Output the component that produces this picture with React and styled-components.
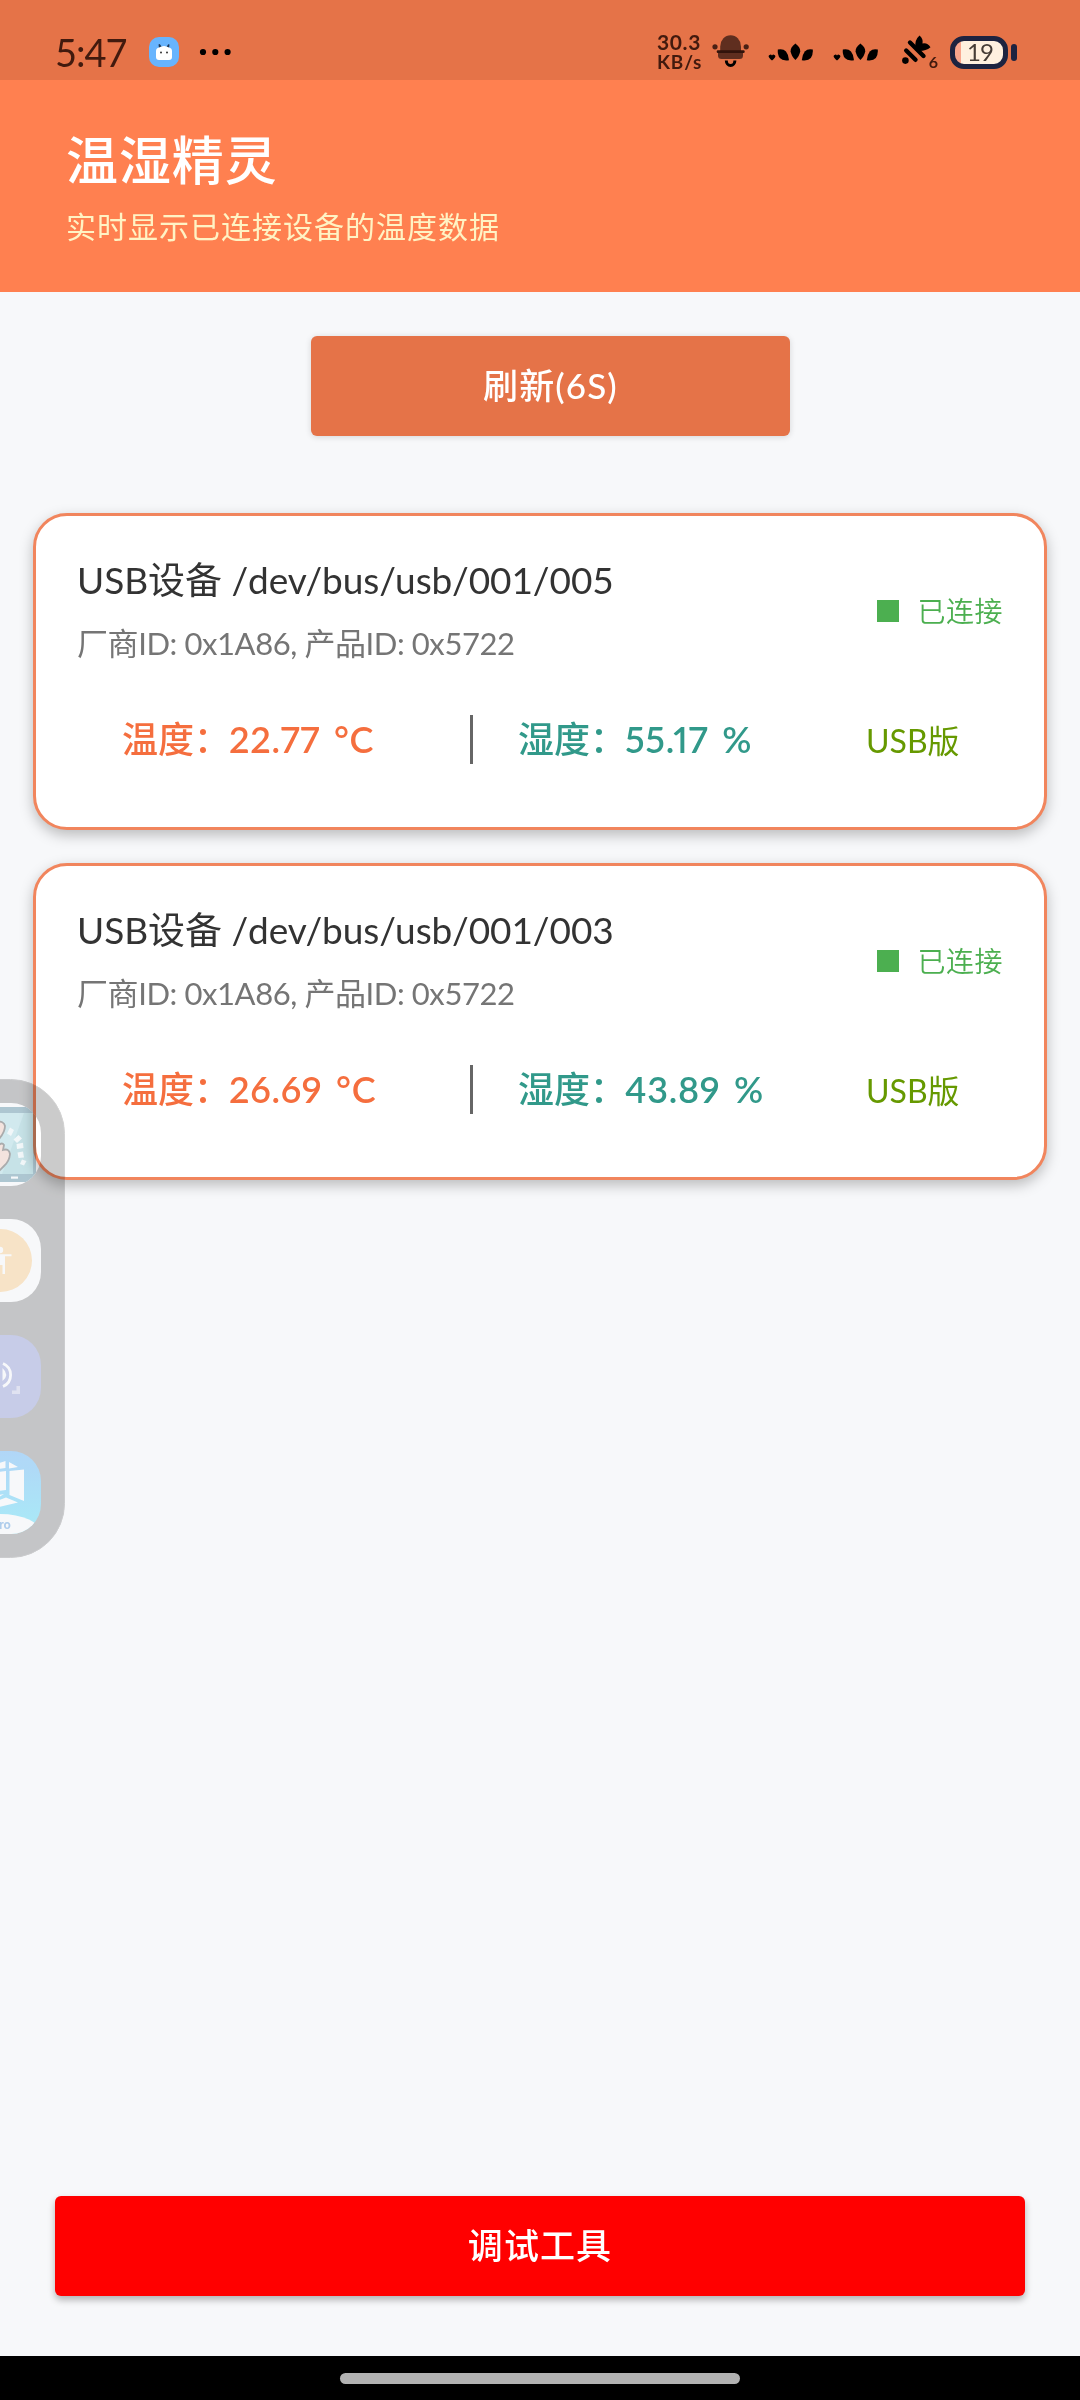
import styled, { createGlobalStyle } from "styled-components";

const GlobalStyle = createGlobalStyle`
    * {
        box-sizing: border-box;
    }
    body {
        margin: 0;
        background: #f7f8fa;
        font-family: Lato, "Noto Sans CJK SC", sans-serif;
    }
`
const Screen = styled.div`
    position: relative;
    display: flex;
    flex-direction: column;
    width: 1080px;
    height: 2400px;
    background: #f7f8fa;
    overflow: hidden;
`
const StatusBar = styled.div`
    display: flex;
    align-items: flex-start;
    justify-content: space-between;
    height: 80px;
    padding: 32px 63px 0 55px;
    background: #e57348;
    color: #421a0e;
`
const StatusGroup = styled.div`
    display: flex;
    align-items: center;
    height: 40px;
`
const Clock = styled.span`
    width: 94px;
    font-size: 38px;
    line-height: 40px;
    letter-spacing: -1px;
`
const NetSpeed = styled.div`
    display: grid;
    width: 55px;
    font-size: 21px;
    font-weight: 700;
    line-height: 20px;
    letter-spacing: 0.6px;
`
const NetUnit = styled.span`
    font-size: 19px;
    letter-spacing: 0.8px;
`
const Battery = styled.div`
    display: flex;
    align-items: center;
    justify-content: center;
    width: 58px;
    height: 33px;
    margin-left: 11px;
    padding-left: 2px;
    border: 5px solid #1d2340;
    border-radius: 14px;
    background: linear-gradient(90deg, #f9a58c 6px, #fff0df 6px);
    color: #463c36;
    font-size: 24px;
    line-height: 24px;
    letter-spacing: -1px;
`
const BatteryTip = styled.div`
    width: 6px;
    height: 17px;
    margin-left: 3px;
    border-radius: 3px;
    background: #1d2340;
`
const Header = styled.header`
    height: 212px;
    padding: 48px 66px 0;
    background: #ff8050;
`
const AppTitle = styled.h1`
    margin: 0;
    color: #fff;
    font-size: 52px;
    font-weight: 500;
    line-height: 64px;
    letter-spacing: 0.9px;
`
const AppSubtitle = styled.p`
    margin: 14px 0 0;
    color: #fff3c4;
    font-size: 30px;
    font-weight: 400;
    line-height: 40px;
    letter-spacing: 1px;
`
const Content = styled.main`
    display: flex;
    flex: 1;
    flex-direction: column;
    padding: 44px 33px 60px;
`
const Button = styled.button`
    width: ${(props) => props.$width}px;
    height: 100px;
    margin: 0 22px;
    padding: 0 0 3px;
    border: 0;
    border-radius: 6px;
    background: ${(props) => props.$color};
    box-shadow: ${(props) => props.$shadow};
    color: #fff;
    font-family: inherit;
    font-size: 35px;
    font-weight: 500;
    line-height: 44px;
    letter-spacing: 1.1px;
`
const RefreshRow = styled.div`
    display: flex;
    justify-content: center;
    padding-left: 21px;
`
const DeviceList = styled.div`
    display: grid;
    gap: 33px;
    margin-top: 77px;
`
const Card = styled.section`
    height: 317px;
    padding: 41px 41px 0 41px;
    border: 3px solid #f1855d;
    border-radius: 34px;
    background: #fff;
    box-shadow: 0 5px 14px rgba(0, 0, 0, 0.25);
`
const CardHead = styled.div`
    display: flex;
    align-items: center;
    justify-content: space-between;
    height: 109px;
`
const DeviceName = styled.div`
    color: #333;
    font-size: 37px;
    line-height: 48px;
    letter-spacing: -0.05px;
`
const DeviceIds = styled.div`
    margin-top: 15px;
    color: #757575;
    font-size: 31px;
    line-height: 48px;
    letter-spacing: -0.42px;
`
const Status = styled.div`
    display: flex;
    align-items: center;
    gap: 18px;
    height: 30px;
    margin-bottom: 2px;
    color: #4caf50;
    font-size: 28px;
    font-weight: 350;
    line-height: 30px;
    letter-spacing: 0.5px;
`
const StatusDot = styled.span`
    width: 22px;
    height: 22px;
    background: #4caf50;
`
const Readings = styled.div`
    display: grid;
    grid-template-columns: 348px 48px 348px auto;
    align-items: center;
    height: 50px;
    margin-top: 47px;
    padding-left: 45px;
`
const Reading = styled.div`
    display: flex;
    padding-bottom: 1px;
    color: ${(props) => props.$color};
    font-size: 36px;
    font-weight: 600;
    font-variant-numeric: proportional-nums;
    line-height: 50px;
    letter-spacing: 0.7px;
    word-spacing: 4px;
`
const ReadingLabel = styled.span`
    width: 107px;
    font-weight: 500;
    letter-spacing: 0;
    white-space: nowrap;
`
const Divider = styled.span`
    width: 3px;
    height: 49px;
    background: #666;
`
const Edition = styled.span`
    padding-top: 3px;
    color: #669900;
    font-size: 32px;
    line-height: 50px;
`
const Spacer = styled.div`
    flex: 1;
`
const NavBar = styled.div`
    display: flex;
    justify-content: center;
    height: 44px;
    padding-top: 17px;
    background: #000;
`
const NavHandle = styled.div`
    width: 400px;
    height: 11px;
    border-radius: 6px;
    background: #b2b2b2;
`
const SidePanel = styled.svg`
    position: absolute;
    top: 1079px;
    left: 0;
    mix-blend-mode: multiply;
`
const IconSlot = styled.svg`
    display: block;
    margin-left: ${(props) => props.$left || 0}px;
`

function AppBadge(){
    return(
        <IconSlot width="30" height="30" viewBox="0 0 30 30">
            <rect width="30" height="30" rx="10" fill="#67b4fe"/>
            <path d="M10.8 12L10.2 7.500L12.600 11M19.200 12L19.800 7.500L17.600 11" stroke="#1d3a5c" strokeWidth="1.4" fill="none"/>
            <path d="M7 14Q7 11 10 10.5Q15 7.500 20 10.5Q23 11 23 14V20Q23 23 20 23H10Q7 23 7 20Z" fill="#fff"/>
            <circle cx="12" cy="15.5" r="1" fill="#333"/>
            <circle cx="18" cy="15.5" r="1" fill="#333"/>
        </IconSlot>
    )
}

function MoreDots(){
    return(
        <IconSlot $left="20" width="34" height="8" viewBox="0 0 34 8">
            <circle cx="4" cy="4" r="3.1"/>
            <circle cx="16.3" cy="4" r="3.1"/>
            <circle cx="28.6" cy="4" r="3.1"/>
        </IconSlot>
    )
}

function BellIcon(){
    return(
        <IconSlot width="38" height="34" viewBox="0 0 38 34">
            <circle cx="3" cy="11.8" r="2.6" fill="#4a2014"/>
            <circle cx="34.2" cy="11.8" r="2.6" fill="#4a2014"/>
            <path d="M8.2 16V11.500A10.400 11.200 0 0 1 29 11.500V16Z" fill="#5f2e1f"/>
            <path d="M6 17.500H31V20.500Q31 24 27.500 24H9.500Q6 24 6 20.500Z" fill="#5f2e1f"/>
            <rect x="4.700" y="15.200" width="28" height="2.800" rx="1.2" fill="#32130b"/>
            <path d="M14.300 25.500A4.300 5 0 0 0 22.900 25.500" fill="none" stroke="#000" strokeWidth="3"/>
        </IconSlot>
    )
}

function LeafIcon({ left }){
    return(
        <IconSlot $left={left} width="45" height="19" viewBox="0 0 45 19">
            <path d="M4 17.500Q.6 14.700 .6 13A1.800 1.700 0 0 1 4 12.600A1.800 1.700 0 0 1 7.400 13Q7.400 14.700 4 17.500Z"/>
            <path d="M9.800 6.500Q15 5.200 18 8.500Q20.800 12 21 17.200Q14.500 18.200 11.800 15Q9.400 12 9.800 6.500Z"/>
            <path d="M27.400 .6Q32.400 4.500 32.200 8.200Q31.800 12.500 27.400 17Q23 12.500 22.600 8.200Q22.400 4.500 27.400 .6Z"/>
            <path d="M44.800 6.500Q39.800 5.200 36.800 8.500Q34 12 33.800 17.200Q40.200 18.200 42.800 15Q45.200 12 44.800 6.500Z"/>
        </IconSlot>
    )
}

function SignalIcon(){
    return(
        <IconSlot $left="23" width="38" height="36" viewBox="0 0 38 36">
            <circle cx="4.400" cy="26.600" r="3.300"/>
            <path d="M5.200 16.500L14.500 25.800M9 8.500L22.500 22" stroke="#000" strokeWidth="4.400" strokeLinecap="round"/>
            <path d="M14.500 13Q13.500 6 18.500 1.500Q22.500 5 21.500 9.500Q26.500 8.500 29.500 13.200Q25 17 18.500 17Z"/>
            <text x="27.800" y="34" fontSize="16" fontWeight="700" fill="#421a0e">6</text>
        </IconSlot>
    )
}

function AppDock(){
    return(
        <SidePanel width="66" height="480" viewBox="0 0 66 480">
            <defs>
                <linearGradient id="dockBlue" x1="0" y1="0" x2="0" y2="1">
                    <stop offset="0" stopColor="#b7dcfc"/>
                    <stop offset="1" stopColor="#aef2fc"/>
                </linearGradient>
                <clipPath id="tileOne"><rect x="-42" y="24" width="83" height="83" rx="30"/></clipPath>
                <clipPath id="tileFour"><rect x="-42" y="372" width="83" height="83" rx="30"/></clipPath>
            </defs>
            <rect x="-60" y=".5" width="124.5" height="478" rx="54" fill="#cbcbcb" stroke="#d2d2d2"/>

            <g clipPath="url(#tileOne)">
                <rect x="-42" y="24" width="83" height="83" fill="#fff"/>
                <rect x="-42" y="28" width="78" height="75" fill="#b3ccd5"/>
                <rect x="-42" y="34" width="75" height="61" fill="#d8f0f3"/>
                <path d="M24 34H33V95H2Z" fill="#cde9ec"/>
                <rect x="11" y="97.5" width="7" height="2.2" fill="#fff"/>
                <path d="M10 48.500L14 51L11 57L7 54.500ZM18.500 56L22 59.500L17 64L13.500 60.500ZM16.500 65L23 63.800L23.500 69L17 70ZM17.500 73.500L23 72.500L24 78.500L18.500 79ZM22 80.500L26.500 82L24 86.500L20 85Z" fill="#fafefe"/>
                <path d="M-4 43Q4 41.500 5 47Q5 53-1 60Q-4 64-6 66M-6 70L-1 66Q2 63 4 66L3 71Q9 69 10 75Q9.500 82 4 87L-3 94" fill="#fbeae3" stroke="#b0b0b0" strokeWidth="1.8"/>
            </g>

            <rect x="-42" y="140" width="83" height="83" rx="30" fill="#fff"/>
            <circle cx=".5" cy="181.5" r="31.5" fill="#ffeacb"/>
            <circle cx="0" cy="171" r="3.2" fill="#fff"/>
            <path d="M-4 175.2H11.5V177.2H5V195H2.5V186H-4Z" fill="#fff"/>

            <rect x="-42" y="256" width="83" height="83" rx="30" fill="#ced2ed"/>
            <path d="M2.500 289Q10 296 2.500 302Z" fill="#fff"/>
            <path d="M3 284.500A12.500 12.500 0 0 1 3 307.500" fill="none" stroke="#fff" strokeWidth="2.8"/>
            <path d="M16.500 307H20V315H12V311.500H16.500Z" fill="#e8e9f6"/>

            <g clipPath="url(#tileFour)">
                <rect x="-42" y="372" width="83" height="83" fill="url(#dockBlue)"/>
                <path d="M-1 384L5.500 382V389L-1 390ZM9 383L18 388L9 389.500ZM-1 393L6 392V411L-1 412ZM9.500 392L24 390.500V422L9.500 416ZM-1 421L6 418.500L18 423.500L-1 428ZM-1 416L4 415L-1 418Z" fill="#fff"/>
                <ellipse cx="0" cy="454" rx="41" ry="19" fill="#fff"/>
                <text x="-1" y="450" fontFamily="Inter" fontSize="12" fontWeight="700" fill="#b5d3f1">ro</text>
            </g>
        </SidePanel>
    )
}

const devices = [
    { path: '/dev/bus/usb/001/005', temperature: '22.77', humidity: '55.17' },
    { path: '/dev/bus/usb/001/003', temperature: '26.69', humidity: '43.89' },
]

function DeviceCard({ device }){
    return(
        <Card>
            <CardHead>
                <div>
                    <DeviceName>USB设备 {device.path}</DeviceName>
                    <DeviceIds>厂商ID: 0x1A86, 产品ID: 0x5722</DeviceIds>
                </div>
                <Status><StatusDot/>已连接</Status>
            </CardHead>
            <Readings>
                <Reading $color="#f56e3e"><ReadingLabel>温度：</ReadingLabel>{device.temperature} °C</Reading>
                <Divider/>
                <Reading $color="#31998a"><ReadingLabel>湿度：</ReadingLabel>{device.humidity} %</Reading>
                <Edition>USB版</Edition>
            </Readings>
        </Card>
    )
}

function App(){
    return(
        <Screen>
            <GlobalStyle/>
            <StatusBar>
                <StatusGroup>
                    <Clock>5:47</Clock>
                    <AppBadge/>
                    <MoreDots/>
                </StatusGroup>
                <StatusGroup>
                    <NetSpeed>
                        <span>30.3</span>
                        <NetUnit>KB/s</NetUnit>
                    </NetSpeed>
                    <BellIcon/>
                    <LeafIcon left={18}/>
                    <LeafIcon left={20}/>
                    <SignalIcon/>
                    <Battery>19</Battery>
                    <BatteryTip/>
                </StatusGroup>
            </StatusBar>
            <Header>
                <AppTitle>温湿精灵</AppTitle>
                <AppSubtitle>实时显示已连接设备的温度数据</AppSubtitle>
            </Header>
            <Content>
                <RefreshRow>
                    <Button $width={479} $color="#e57348" $shadow="0 1px 6px rgba(0, 0, 0, 0.14)">刷新(6S)</Button>
                </RefreshRow>
                <DeviceList>
                    {devices.map((device) => <DeviceCard key={device.path} device={device}/>)}
                </DeviceList>
                <Spacer/>
                <Button $width={970} $color="#ff0000" $shadow="0 4px 7px rgba(0, 0, 0, 0.28)">调试工具</Button>
            </Content>
            <NavBar><NavHandle/></NavBar>
            <AppDock/>
        </Screen>
    )
}

export default App
